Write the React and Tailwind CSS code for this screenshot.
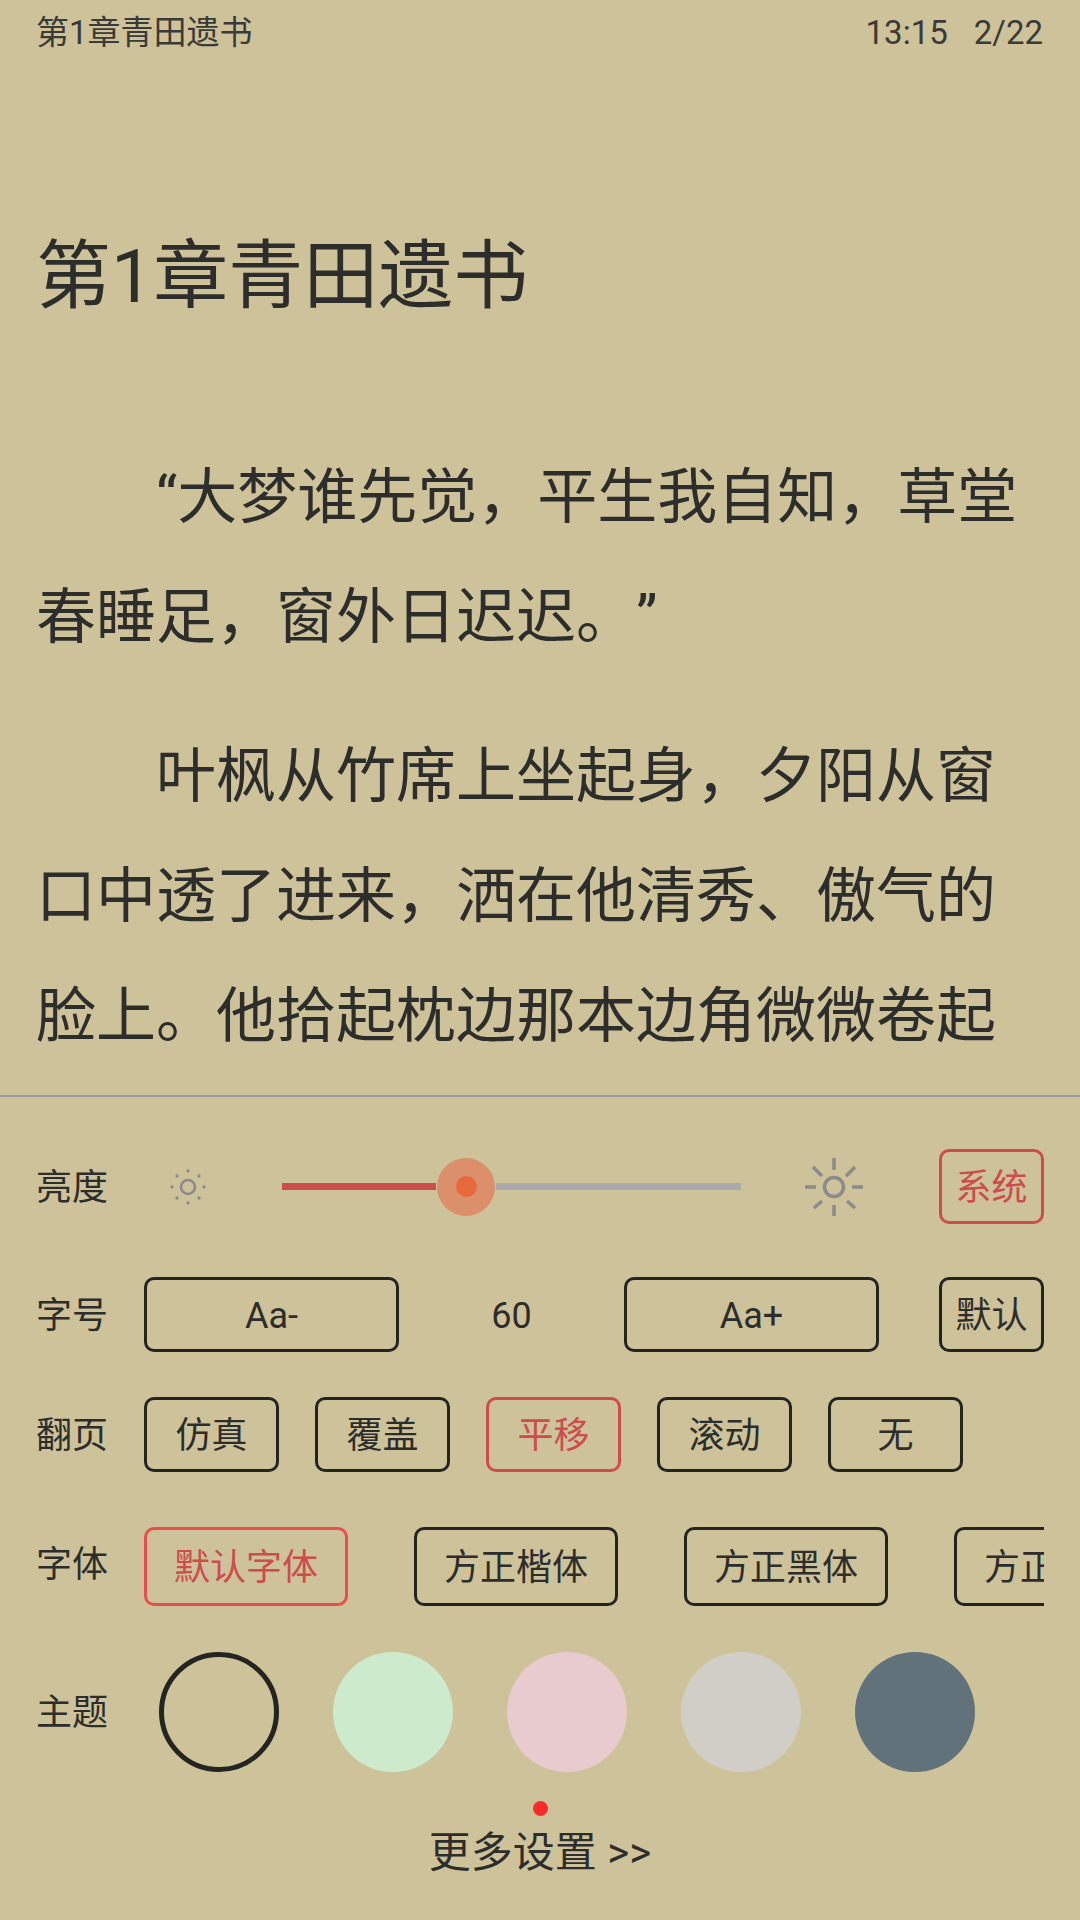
const fontStack = { fontFamily: 'Roboto, "Noto Sans CJK SC", sans-serif' };

const SmallSun = () => (
  <svg width="40" height="40" viewBox="-20 -20 40 40" fill="none">
    <circle cx="0" cy="0" r="7" stroke="#8b8b8b" strokeWidth="2.6" />
    {[[0, -16], [0, 16], [-16, 0], [16, 0], [-11, -11], [11, -11], [-11, 11], [11, 11]].map(([x, y]) => (
      <circle key={`${x}${y}`} cx={x} cy={y} r="1.7" fill="#8b8b8b" />
    ))}
  </svg>
);

const BigSun = () => (
  <svg width="60" height="60" viewBox="-30 -30 60 60" fill="none" stroke="#8b8b8b" strokeWidth="3.5">
    <circle cx="0" cy="0" r="9.5" />
    <path d="M0 -29V-17M0 18V29M-29 0H-18M18 0H29M-21 -20L-12 -11M21 -20L12 -11M-12 14L-20 21M13 14L21 21" />
  </svg>
);

const Option = ({ children, active, className = '' }) => (
  <div
    className={`flex shrink-0 items-center justify-center rounded-[10px] border-[3.5px] pt-[3px] ${
      active ? 'border-[#cd4c4c] text-[#cd4c4c]' : 'border-[#242420] text-[#2d2e2b]'
    } ${className}`}
  >
    {children}
  </div>
);

const Label = ({ children, className = 'pt-[3px]' }) => (
  <div className={`w-[108px] shrink-0 text-[36px] leading-none ${className}`}>{children}</div>
);

export default function App() {
  const themes = ['bg-[#cdeacd]', 'bg-[#e8cbce]', 'bg-[#d0cec6]', 'bg-[#62727b]'];

  return (
    <div style={fontStack} className="flex h-[1920px] w-[1080px] flex-col overflow-hidden bg-[#cec29b] text-[#2d2e2b]">
      {/* Reader page */}
      <div className="h-[1095px] shrink-0 pl-[36px] pr-[37px] [text-spacing-trim:space-all]">
        <div className="flex h-[64px] items-center justify-between pt-[1px] text-[33px] text-[#3a3a36]">
          <span>第1章青田遗书</span>
          <span className="flex gap-[26px]">
            <span>13:15</span>
            <span>2/22</span>
          </span>
        </div>
        <h1 className="mt-[162px] text-[75px] leading-[100px] font-normal">第1章青田遗书</h1>
        <p className="mt-[112px] indent-[120px] text-[60px] leading-[120px]">“大梦谁先觉，平生我自知，草堂春睡足，窗外日迟迟。”</p>
        <p className="mt-[39px] indent-[120px] text-[60px] leading-[120px]">叶枫从竹席上坐起身，夕阳从窗口中透了进来，洒在他清秀、傲气的脸上。他拾起枕边那本边角微微卷起</p>
      </div>

      <div className="h-[2px] shrink-0 bg-[#9a9aa5]" />

      {/* Settings panel */}
      <div className="flex flex-1 flex-col pl-[36px] pr-[36px]">
        <div className="mt-[52px] flex h-[75px] items-center">
          <Label>亮度</Label>
          <div className="ml-[24px] flex w-[40px] justify-center">
            <SmallSun />
          </div>
          <div className="ml-[74px] flex w-[459px] items-center">
            <div className="h-[7px] w-[154px] bg-[#cd4c4c]" />
            <div className="mx-[1px] flex h-[58px] w-[58px] shrink-0 items-center justify-center rounded-full bg-[#dc8f6b]">
              <div className="h-[21px] w-[21px] rounded-full bg-[#e76a3e]" />
            </div>
            <div className="h-[7px] flex-1 bg-[#aaaaaa]" />
          </div>
          <div className="ml-[63px]">
            <BigSun />
          </div>
          <Option active className="ml-auto h-[75px] w-[105px] text-[36px]">系统</Option>
        </div>

        <div className="mt-[53px] flex h-[75px] items-center text-[36px]">
          <Label>字号</Label>
          <Option className="h-[75px] w-[255px]">Aa-</Option>
          <div className="w-[225px] pt-[3px] text-center">60</div>
          <Option className="h-[75px] w-[255px]">Aa+</Option>
          <Option className="ml-auto h-[75px] w-[105px]">默认</Option>
        </div>

        <div className="mt-[45px] flex h-[75px] items-center gap-[36px] text-[36px]">
          <div className="mr-[-36px]">
            <Label>翻页</Label>
          </div>
          <Option className="h-[75px] w-[135px]">仿真</Option>
          <Option className="h-[75px] w-[135px]">覆盖</Option>
          <Option active className="h-[75px] w-[135px]">平移</Option>
          <Option className="h-[75px] w-[135px]">滚动</Option>
          <Option className="h-[75px] w-[135px]">无</Option>
        </div>

        <div className="mt-[55px] flex h-[79px] items-center text-[36px]">
          <Label className="pb-[4px]">字体</Label>
          <div className="flex flex-1 gap-[66px] overflow-hidden">
            <Option active className="h-[79px] w-[204px] !border-[#e84e4e]">默认字体</Option>
            <Option className="h-[79px] w-[204px]">方正楷体</Option>
            <Option className="h-[79px] w-[204px]">方正黑体</Option>
            <Option className="h-[79px] w-[204px]">方正宋体</Option>
          </div>
        </div>

        <div className="mt-[46px] flex h-[120px] items-center">
          <Label className="pt-[2px]">主题</Label>
          <div className="ml-[15px] flex gap-[54px]">
            <div className="h-[120px] w-[120px] rounded-full border-[5px] border-[#242420]" />
            {themes.map((color) => (
              <div key={color} className={`h-[120px] w-[120px] rounded-full ${color}`} />
            ))}
          </div>
        </div>

        <div className="mt-[29px] flex flex-col items-center">
          <div className="h-[15px] w-[15px] rounded-full bg-[#f92a2a]" />
          <div className="mt-[2px] text-[42px] leading-[70px]">更多设置 &gt;&gt;</div>
        </div>
      </div>
    </div>
  );
}
